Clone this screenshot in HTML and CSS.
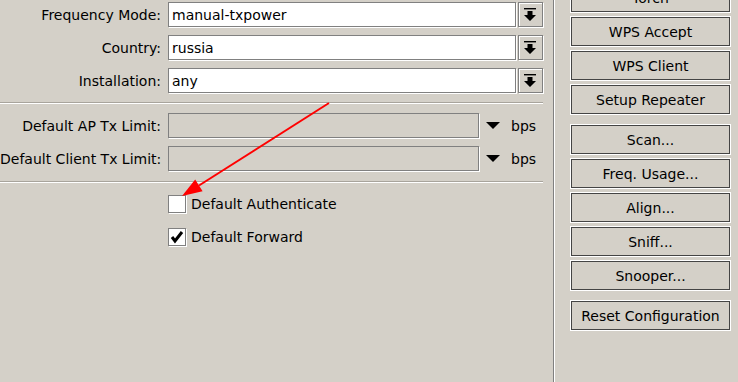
FILE: index.html
```html
<!doctype html>
<html lang="en">
    <head>
        <meta charset="UTF-8" />
        <title>Wireless - Advanced</title>
        <link rel="stylesheet" href="styles.css">
    </head>
    <body>
        <div class="window">
            <div class="main">
                <div class="row">
                    <label class="lbl">Frequency Mode:</label>
                    <div class="field">manual-txpower</div>
                    <div class="drop-btn">
                        <svg width="22" height="23" viewBox="0 0 22 23"><rect x="5" y="5" width="12" height="1.4" fill="#000"/><path d="M8.5 8h5v4h3.5l-6 6-6-6h3.5z" fill="#000"/></svg>
                    </div>
                </div>
                <div class="row">
                    <label class="lbl">Country:</label>
                    <div class="field">russia</div>
                    <div class="drop-btn">
                        <svg width="22" height="23" viewBox="0 0 22 23"><rect x="5" y="5" width="12" height="1.4" fill="#000"/><path d="M8.5 8h5v4h3.5l-6 6-6-6h3.5z" fill="#000"/></svg>
                    </div>
                </div>
                <div class="row">
                    <label class="lbl">Installation:</label>
                    <div class="field">any</div>
                    <div class="drop-btn">
                        <svg width="22" height="23" viewBox="0 0 22 23"><rect x="5" y="5" width="12" height="1.4" fill="#000"/><path d="M8.5 8h5v4h3.5l-6 6-6-6h3.5z" fill="#000"/></svg>
                    </div>
                </div>

                <div class="sep"></div>

                <div class="row">
                    <label class="lbl">Default AP Tx Limit:</label>
                    <div class="field disabled"></div>
                    <span class="tri"></span>
                    <span class="unit">bps</span>
                </div>
                <div class="row">
                    <label class="lbl">Default Client Tx Limit:</label>
                    <div class="field disabled"></div>
                    <span class="tri"></span>
                    <span class="unit">bps</span>
                </div>

                <div class="sep sep-b"></div>

                <div class="check-row">
                    <span class="box"></span>
                    <span>Default Authenticate</span>
                </div>
                <div class="check-row">
                    <span class="box">
                        <svg width="16" height="16" viewBox="0 0 16 16"><path d="M3 8l3 4 7-9" fill="none" stroke="#000" stroke-width="3"/></svg>
                    </span>
                    <span>Default Forward</span>
                </div>
            </div>

            <div class="divider"></div>

            <div class="side">
                <div class="btn">Torch</div>
                <div class="btn">WPS Accept</div>
                <div class="btn">WPS Client</div>
                <div class="btn">Setup Repeater</div>
                <div class="btn group">Scan...</div>
                <div class="btn">Freq. Usage...</div>
                <div class="btn">Align...</div>
                <div class="btn">Sniff...</div>
                <div class="btn">Snooper...</div>
                <div class="btn group">Reset Configuration</div>
            </div>
        </div>

        <svg class="annotation" width="738" height="382" viewBox="0 0 738 382">
            <line x1="329" y1="103" x2="199" y2="185.5" stroke="#ff0000" stroke-width="2"/>
            <polygon points="182,196 202.6,191.2 195.2,179.4" fill="#ff0000"/>
        </svg>
    </body>
</html>
```

FILE: styles.css
```css
* {
    margin: 0;
    padding: 0;
    box-sizing: border-box;
}

body {
    font-family: "DejaVu Sans", Verdana, sans-serif;
    font-size: 14px;
    background: #d4d0c8;
    color: #000;
    width: 738px;
    height: 382px;
    overflow: hidden;
    position: relative;
}

.window {
    display: flex;
    height: 382px;
}

.main {
    width: 543px;
    flex-shrink: 0;
    padding-top: 2px;
}

.row {
    display: flex;
    align-items: center;
    height: 25px;
    margin-bottom: 8px;
}

.lbl {
    width: 161px;
    flex-shrink: 0;
    margin-right: 7px;
    padding-top: 1px;
    text-align: right;
    white-space: nowrap;
}

.field {
    width: 349px;
    height: 25px;
    line-height: 24px;
    padding-left: 3px;
    background: #fff;
    border: 1px solid #808080;
    box-shadow: 1px 1px 0 #fff;
}

.field.disabled {
    width: 311px;
    background: #d4d0c8;
}

.unit {
    padding-top: 1px;
}

.drop-btn {
    width: 25px;
    height: 25px;
    margin-left: 2px;
    border: 1px solid #808080;
    box-shadow: inset 1px 1px 0 #fff, 1px 1px 0 #fff;
}

.drop-btn svg {
    display: block;
}

.tri {
    width: 0;
    height: 0;
    margin-left: 7px;
    margin-right: 11px;
    border-left: 7px solid transparent;
    border-right: 7px solid transparent;
    border-top: 7px solid #000;
}

.sep {
    height: 2px;
    border-top: 1px solid #a8a49c;
    border-bottom: 1px solid #fff;
    margin: 9px 0;
}

.sep-b {
    margin: 10px 0 12px;
}

.check-row {
    display: flex;
    align-items: center;
    height: 18px;
    margin-left: 168px;
    margin-bottom: 15px;
    gap: 5px;
}

.box {
    width: 18px;
    height: 18px;
    background: #fff;
    border: 1px solid #808080;
    box-shadow: 1px 1px 0 #fff;
}

.box svg {
    display: block;
}

.divider {
    width: 2px;
    margin-left: 10px;
    border-left: 1px solid #808080;
    border-right: 1px solid #fff;
}

.side {
    margin-left: 15px;
    margin-top: -18px;
    display: flex;
    flex-direction: column;
    gap: 3px;
}

.btn {
    width: 161px;
    height: 31px;
    line-height: 30px;
    text-align: center;
    border: 1px solid #fff;
    box-shadow: inset 0 0 0 1px #444;
}

.btn.group {
    margin-top: 6px;
}

.annotation {
    position: absolute;
    left: 0;
    top: 0;
    pointer-events: none;
}
```
